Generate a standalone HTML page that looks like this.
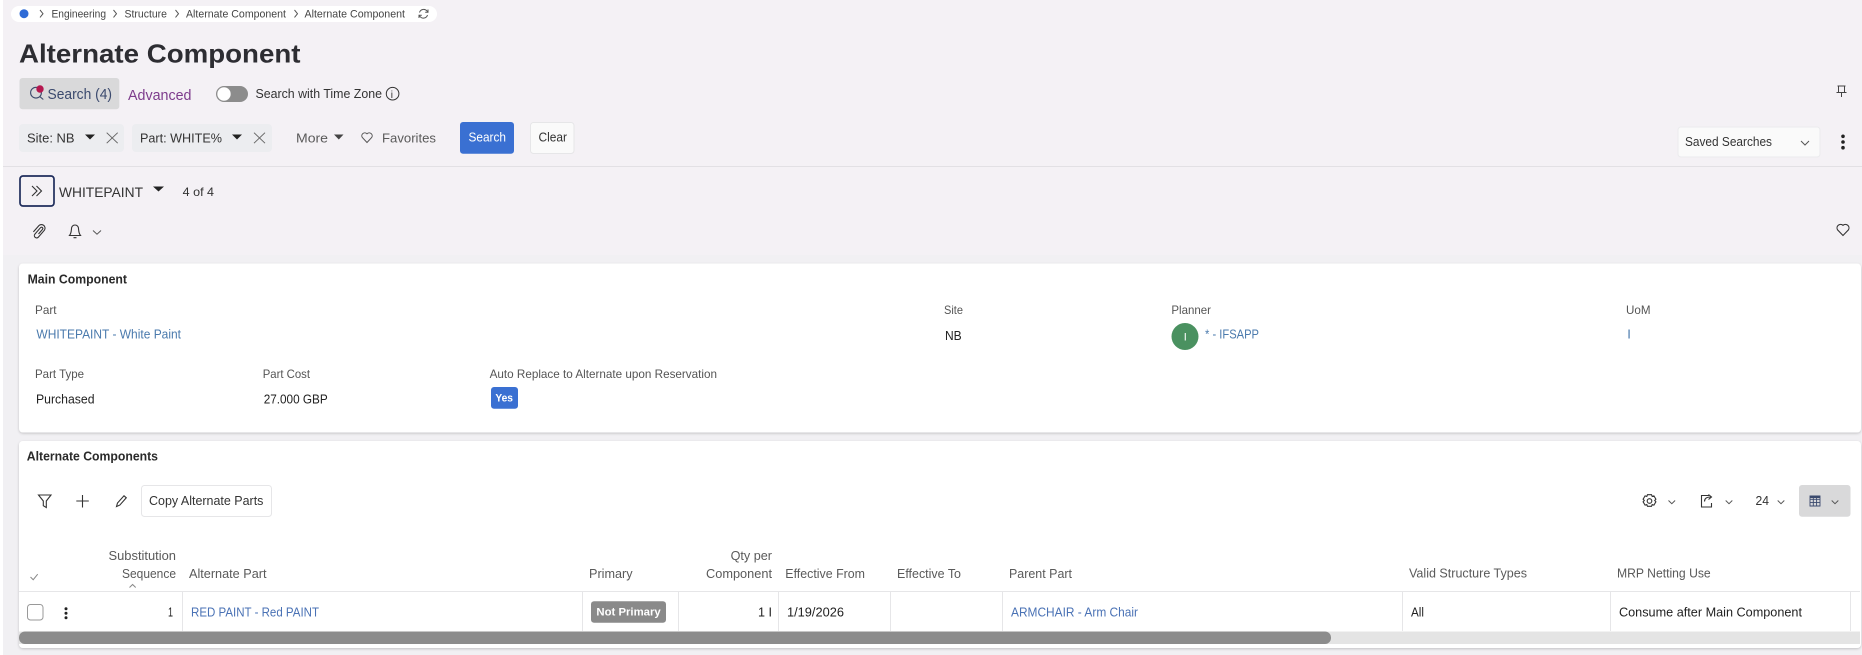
<!DOCTYPE html>
<html lang="en"><head><meta charset="utf-8"><title>Alternate Component</title>
<style>
html,body{margin:0;padding:0;width:1862px;height:655px;overflow:hidden;background:#f4f1f5}
svg{display:block;position:absolute;left:0;top:0;filter:blur(.35px)}
text{font-family:"Liberation Sans",sans-serif;fill:#333}
.bc{font-size:11px;fill:#444}
.lb{font-size:12px;fill:#555}
.v{font-size:13px;fill:#222}
.lk{font-size:13px;fill:#4a7aad}
.lk2{font-size:13px;fill:#4a72b5}
.th{font-size:13px;fill:#5a5a5a}
.ct{font-size:13px;fill:#333}
.ic{fill:none;stroke:#333;stroke-width:1.1}
.chv{fill:none;stroke:#555;stroke-width:1}
.sep{stroke:#e6e6e8;stroke-width:1}
</style></head><body>
<svg width="1862" height="655" viewBox="0 0 1862 655" xmlns="http://www.w3.org/2000/svg">
<defs><filter id="s" x="-2%" y="-5%" width="104%" height="112%"><feDropShadow dx="0" dy="1" stdDeviation="1.2" flood-color="#000" flood-opacity=".2"/></filter></defs>
<rect x="0" y="0" width="3" height="655" fill="#fff"/>
<rect x="3" y="255" width="1859" height="400" fill="#f1f0f3"/>

<!-- breadcrumb -->
<rect x="11" y="6" width="426" height="16" rx="8" fill="#fff"/>
<circle cx="24" cy="13.7" r="4.5" fill="#2f6bd6"/>
<path class="chv" d="M40 10l3 3.7-3 3.7M113.500 10l3 3.700-3 3.700M175.500 10l3 3.700-3 3.700M294.500 10l3 3.700-3 3.700"/>
<text class="bc" x="51.500" y="17.500" textLength="54.500" lengthAdjust="spacingAndGlyphs">Engineering</text>
<text class="bc" x="124.500" y="17.500" textLength="42.500" lengthAdjust="spacingAndGlyphs">Structure</text>
<text class="bc" x="186" y="17.500" textLength="100" lengthAdjust="spacingAndGlyphs">Alternate Component</text>
<text class="bc" x="304.500" y="17.500" textLength="100.500" lengthAdjust="spacingAndGlyphs">Alternate Component</text>
<path class="chv" d="M419.500 12.500a4.300 4.300 0 0 1 7.500-1.500l1 1.200M427.500 15a4.300 4.300 0 0 1-7.500 1.500l-1-1.200M428 9.500v2.800h-2.800M419 18v-2.800h2.800"/>

<!-- title -->
<text x="19" y="62.700" font-size="26" font-weight="700" style="fill:#2d2d32" textLength="281.500" lengthAdjust="spacingAndGlyphs">Alternate Component</text>

<!-- search row -->
<rect x="19.500" y="78" width="99.800" height="31.300" rx="3" fill="#d9d9da"/>
<circle cx="36" cy="92.700" r="5.400" fill="none" stroke="#3c4a6b" stroke-width="1.100"/>
<path d="M39.800 96.600l3.500 2.900" stroke="#3c4a6b" stroke-width="1.100"/>
<circle cx="40" cy="89" r="3.700" fill="#b5174f"/>
<text x="47.500" y="99" font-size="14.500" style="fill:#3b4a6e" textLength="64.500" lengthAdjust="spacingAndGlyphs">Search (4)</text>
<text x="128" y="100" font-size="14.500" style="fill:#7d3b8c" textLength="63.500" lengthAdjust="spacingAndGlyphs">Advanced</text>
<rect x="216" y="86" width="32" height="16" rx="8" fill="#8c8c8c"/>
<circle cx="224" cy="94" r="7" fill="#fff" stroke="#8c8c8c" stroke-width=".6"/>
<text x="255.500" y="98" font-size="13" style="fill:#333" textLength="126.500" lengthAdjust="spacingAndGlyphs">Search with Time Zone</text>
<circle cx="392.600" cy="93.700" r="6.300" fill="none" stroke="#333" stroke-width="1"/>
<text x="390.800" y="97.800" font-size="10" style="fill:#333">i</text>

<!-- chips -->
<rect x="19" y="124" width="105" height="28" rx="4" fill="#ecedf0"/>
<text class="ct" x="27" y="142.700" textLength="47.500" lengthAdjust="spacingAndGlyphs">Site: NB</text>
<path d="M85 134.500h10l-5 5z" fill="#222"/>
<path d="M106.700 132.700l11 10.500M117.700 132.700l-11 10.500" stroke="#666" stroke-width="1" fill="none"/>
<rect x="132" y="124" width="140" height="28" rx="4" fill="#ecedf0"/>
<text class="ct" x="140" y="142.700" textLength="82" lengthAdjust="spacingAndGlyphs">Part: WHITE%</text>
<path d="M232 134.500h10l-5 5z" fill="#222"/>
<path d="M254 132.700l11 10.500M265 132.700l-11 10.500" stroke="#666" stroke-width="1" fill="none"/>
<text class="th" x="296" y="142.700" textLength="32" lengthAdjust="spacingAndGlyphs">More</text>
<path d="M334 134.500h9.500l-4.700 5z" fill="#444"/>
<path class="chv" d="M367 142.500l-4.700-5a3 3 0 0 1 4.700-3.700a3 3 0 0 1 4.700 3.700z"/>
<text class="th" x="382" y="142.700" textLength="54" lengthAdjust="spacingAndGlyphs">Favorites</text>
<rect x="460" y="122" width="54" height="31.700" rx="3" fill="#3a70d2"/>
<text x="468.500" y="141.700" font-size="12.500" style="fill:#fff" textLength="37.500" lengthAdjust="spacingAndGlyphs">Search</text>
<rect x="530.500" y="122.500" width="43.500" height="31" rx="3" fill="#fafafa" stroke="#e6e6e8"/>
<text x="538.500" y="141.700" font-size="12.500" style="fill:#333" textLength="28.500" lengthAdjust="spacingAndGlyphs">Clear</text>

<!-- right top -->
<path class="chv" d="M1837.500 86h8M1838.500 86v6.500M1844.500 86v6.500M1836.500 92.500h10M1841.500 92.500v4.500" style="stroke:#444"/>
<rect x="1678" y="127" width="142" height="30" rx="3" fill="#fafafa" stroke="#ebebed"/>
<text class="ct" x="1685" y="146" textLength="87" lengthAdjust="spacingAndGlyphs">Saved Searches</text>
<path class="chv" d="M1801 141l4 4 4-4"/>
<circle cx="1843" cy="136.300" r="1.800" fill="#222"/><circle cx="1843" cy="142" r="1.800" fill="#222"/><circle cx="1843" cy="147.700" r="1.800" fill="#222"/>
<line x1="3" y1="166.500" x2="1862" y2="166.500" stroke="#e2e0e4"/>

<!-- record bar -->
<rect x="20" y="176" width="34" height="30" rx="3" fill="none" stroke="#1f2d5c" stroke-width="1.700"/>
<path class="ic" d="M32 186l5 5-5 5M36.500 186l5 5-5 5"/>
<text x="59" y="197" font-size="14" style="fill:#333" textLength="84" lengthAdjust="spacingAndGlyphs">WHITEPAINT</text>
<path d="M153 186.500h11l-5.500 5z" fill="#222"/>
<text x="182.700" y="196" font-size="12" style="fill:#333" textLength="31.300" lengthAdjust="spacingAndGlyphs">4 of 4</text>
<path class="ic" d="M38.500 234l4-4.600a1.300 1.300 0 0 0-2-1.700l-5.600 6.400a2.300 2.300 0 0 0 3.500 3l6-6.900a3.600 3.600 0 0 0-5.400-4.700l-5.600 6.400"/>
<path class="ic" d="M69.500 235.500c1.800-2.200 1.800-4.500 2-7a3.500 3.500 0 0 1 7 0c.2 2.500.2 4.800 2 7zM73.500 237.700h3"/>
<path class="chv" d="M93 230.500l4 3.700 4-3.700"/>
<path class="ic" d="M1843 235.500l-5.500-5.700a3.600 3.600 0 0 1 5.500-4.500a3.600 3.600 0 0 1 5.500 4.500z"/>

<!-- main component card -->
<rect x="19" y="263.500" width="1842" height="169" rx="4" fill="#fff" filter="url(#s)"/>
<text x="27.600" y="283.300" font-size="12.500" font-weight="700" style="fill:#2a2a2a" textLength="99.400" lengthAdjust="spacingAndGlyphs">Main Component</text>
<text class="lb" x="35" y="314" textLength="21.500" lengthAdjust="spacingAndGlyphs">Part</text>
<text class="lb" x="944" y="314" textLength="19" lengthAdjust="spacingAndGlyphs">Site</text>
<text class="lb" x="1171.400" y="314" textLength="39.600" lengthAdjust="spacingAndGlyphs">Planner</text>
<text class="lb" x="1626" y="314" textLength="24.500" lengthAdjust="spacingAndGlyphs">UoM</text>
<text class="lk" x="36.400" y="338.700" textLength="144.600" lengthAdjust="spacingAndGlyphs">WHITEPAINT - White Paint</text>
<text class="v" x="945" y="340" textLength="16.700" lengthAdjust="spacingAndGlyphs">NB</text>
<circle cx="1185" cy="336.500" r="13.500" fill="#4a9160"/>
<text x="1183.800" y="340.500" font-size="11" style="fill:#fff">I</text>
<text class="lk" x="1205" y="338.700" textLength="54" lengthAdjust="spacingAndGlyphs">* - IFSAPP</text>
<text class="lk" x="1627.300" y="338.700">I</text>
<text class="lb" x="35" y="378" textLength="49" lengthAdjust="spacingAndGlyphs">Part Type</text>
<text class="lb" x="262.700" y="378" textLength="47.300" lengthAdjust="spacingAndGlyphs">Part Cost</text>
<text class="lb" x="489.600" y="378" textLength="227.400" lengthAdjust="spacingAndGlyphs">Auto Replace to Alternate upon Reservation</text>
<text class="v" x="36" y="403.300" textLength="58.500" lengthAdjust="spacingAndGlyphs">Purchased</text>
<text class="v" x="263.700" y="403.300" textLength="64" lengthAdjust="spacingAndGlyphs">27.000 GBP</text>
<rect x="491" y="387" width="27" height="21.700" rx="3" fill="#3a70d2"/>
<text x="495.400" y="401.300" font-size="11" font-weight="700" style="fill:#fff" textLength="17.600" lengthAdjust="spacingAndGlyphs">Yes</text>

<!-- alternate components card -->
<rect x="19" y="441" width="1842" height="207" rx="4" fill="#fff" filter="url(#s)"/>
<text x="26.800" y="460.700" font-size="12.500" font-weight="700" style="fill:#2a2a2a" textLength="131.200" lengthAdjust="spacingAndGlyphs">Alternate Components</text>
<path class="ic" d="M38.500 495h12.500l-4.700 6v6.500l-3-1.800v-4.700z"/>
<path class="ic" d="M82.500 495v12.500M76.300 501h12.500"/>
<path class="ic" d="M116.500 506.500l1-3.500 6.500-7.200 2.300 2-6.500 7.300z"/>
<rect x="141.500" y="485.500" width="130" height="31" rx="3" fill="#fff" stroke="#e6e6e8"/>
<text class="ct" x="149" y="505" textLength="114.400" lengthAdjust="spacingAndGlyphs">Copy Alternate Parts</text>
<circle cx="1649.500" cy="501" r="2.300" class="ic"/>
<path class="ic" d="M1647.500 494.700h4l.7 1.700 1.700-.5 2 3.300-1.200 1.300 1.200 1.300-2 3.300-1.700-.5-.7 1.700h-4l-.7-1.700-1.700.5-2-3.300 1.200-1.300-1.200-1.300 2-3.300 1.700.5z"/>
<path class="chv" d="M1668.500 500.500l3.300 3.200 3.300-3.200"/>
<path class="ic" d="M1709 495.500h-7.500v11.500h10v-4M1704.500 501.500c0-3 2-4.500 6-4.500M1708.500 494.500l3 2.500-3 2.500"/>
<path class="chv" d="M1725.700 500.500l3.300 3.200 3.300-3.200"/>
<text x="1755.500" y="505" font-size="13" style="fill:#333" textLength="13.500" lengthAdjust="spacingAndGlyphs">24</text>
<path class="chv" d="M1777.700 500.500l3.300 3.200 3.300-3.200"/>
<rect x="1799" y="485" width="51.500" height="31.700" rx="3" fill="#d9d9da"/>
<path d="M1810 496h10v10h-10zM1810 499.300h10M1810 502.600h10M1813.300 496v10M1816.600 496v10" fill="none" stroke="#3b4a6e" stroke-width=".9"/>
<path d="M1810 496h10v2h-10z" fill="#3b4a6e"/>
<path class="chv" d="M1831.700 500.500l3.300 3.200 3.300-3.200"/>

<!-- header -->
<text class="th" x="108.500" y="560" textLength="67.500" lengthAdjust="spacingAndGlyphs">Substitution</text>
<text class="th" x="122" y="578" textLength="54" lengthAdjust="spacingAndGlyphs">Sequence</text>
<path class="chv" d="M129.500 587.500l3.100-3 3.100 3" style="stroke:#888"/>
<path class="chv" d="M30.500 577l2.700 2.700 4.500-5.500" style="stroke:#888"/>
<text class="th" x="189" y="578" textLength="77.500" lengthAdjust="spacingAndGlyphs">Alternate Part</text>
<text class="th" x="589" y="578" textLength="43.600" lengthAdjust="spacingAndGlyphs">Primary</text>
<text class="th" x="730.600" y="560" textLength="41.400" lengthAdjust="spacingAndGlyphs">Qty per</text>
<text class="th" x="706" y="578" textLength="66" lengthAdjust="spacingAndGlyphs">Component</text>
<text class="th" x="785.300" y="578" textLength="79.700" lengthAdjust="spacingAndGlyphs">Effective From</text>
<text class="th" x="897" y="578" textLength="64" lengthAdjust="spacingAndGlyphs">Effective To</text>
<text class="th" x="1009" y="578" textLength="63" lengthAdjust="spacingAndGlyphs">Parent Part</text>
<text class="th" x="1409" y="577.700" textLength="118" lengthAdjust="spacingAndGlyphs">Valid Structure Types</text>
<text class="th" x="1617" y="577.700" textLength="93.700" lengthAdjust="spacingAndGlyphs">MRP Netting Use</text>
<line class="sep" x1="19" y1="591.500" x2="1860" y2="591.500"/>
<path class="sep" d="M182.500 592v39M582.500 592v39M678.500 592v39M778.500 592v39M890.500 592v39M1002.500 592v39M1402.500 592v39M1610.500 592v39M1850.500 592v39"/>

<!-- row -->
<rect x="27.500" y="604.500" width="15.500" height="15.500" rx="3" fill="#fff" stroke="#999"/>
<circle cx="66" cy="608.800" r="1.500" fill="#222"/><circle cx="66" cy="613.300" r="1.500" fill="#222"/><circle cx="66" cy="617.800" r="1.500" fill="#222"/>
<text class="v" x="168" y="616.700" text-anchor="start" textLength="5" lengthAdjust="spacingAndGlyphs">1</text>
<text class="lk2" x="191" y="616.700" textLength="128" lengthAdjust="spacingAndGlyphs">RED PAINT - Red PAINT</text>
<rect x="591" y="601.300" width="75" height="21.400" rx="3" fill="#8a8a8a"/>
<text x="596.400" y="615.700" font-size="11" font-weight="700" style="fill:#fff" textLength="64.300" lengthAdjust="spacingAndGlyphs">Not Primary</text>
<text class="v" x="758" y="616.700" textLength="14" lengthAdjust="spacingAndGlyphs">1 I</text>
<text class="v" x="787" y="616.700" textLength="57" lengthAdjust="spacingAndGlyphs">1/19/2026</text>
<text class="lk2" x="1011" y="616.700" textLength="127" lengthAdjust="spacingAndGlyphs">ARMCHAIR - Arm Chair</text>
<text class="v" x="1411" y="616.700" textLength="13" lengthAdjust="spacingAndGlyphs">All</text>
<text class="v" x="1619" y="616.700" textLength="183" lengthAdjust="spacingAndGlyphs">Consume after Main Component</text>

<!-- scrollbar -->
<rect x="19" y="631.500" width="1841" height="12.500" fill="#e4e4e4"/>
<rect x="19" y="631.500" width="1312" height="12.500" rx="6" fill="#8c8c8c"/>
</svg>
</body></html>
